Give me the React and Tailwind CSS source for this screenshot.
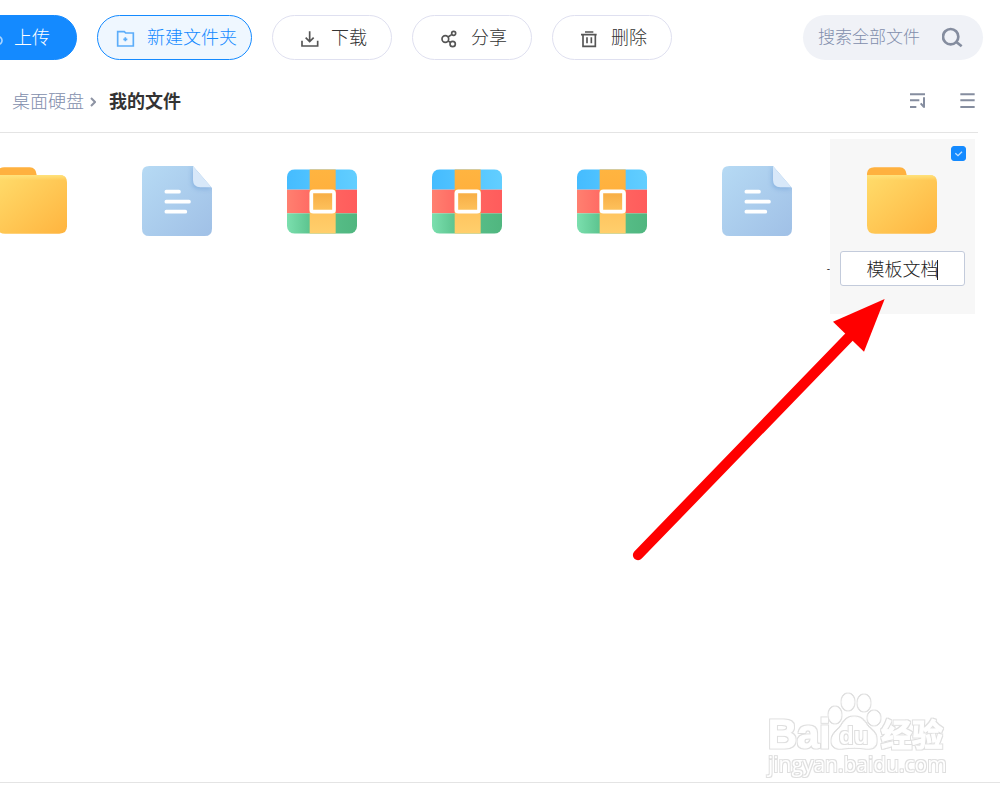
import { useState } from "react";

const initialFiles = [
  { id: 1, type: "folder" },
  { id: 2, type: "doc" },
  { id: 3, type: "archive" },
  { id: 4, type: "archive" },
  { id: 5, type: "archive" },
  { id: 6, type: "doc", label: "-" },
  { id: 7, type: "folder", editing: true },
];

function ToolIcon({ children, className = "" }) {
  return (
    <svg
      viewBox="0 0 63 63"
      className={`h-[21px] w-[21px] shrink-0 ${className}`}
      fill="none"
      stroke="currentColor"
      strokeWidth="5"
      aria-hidden="true"
    >
      {children}
    </svg>
  );
}

function ToolButton({ icon, label, className }) {
  return (
    <button
      type="button"
      className={`flex h-[45px] shrink-0 items-center gap-[11px] rounded-full border text-lg whitespace-nowrap ${className}`}
    >
      {icon}
      <span>{label}</span>
    </button>
  );
}

function FolderIcon() {
  return (
    <svg viewBox="0 0 210 210" className="block h-[70px] w-[70px]" aria-hidden="true">
      <defs>
        <linearGradient id="folderBody" x1="0" y1="0" x2="1" y2="1">
          <stop offset="0" stopColor="#ffdc6b" />
          <stop offset="1" stopColor="#ffb43f" />
        </linearGradient>
        <linearGradient id="folderEdge" x1="0" y1="0" x2="0" y2="1">
          <stop offset="0" stopColor="#ffe27c" />
          <stop offset="1" stopColor="#ffe27c" stopOpacity="0" />
        </linearGradient>
      </defs>
      <path d="M0 34V22Q2 4 22 4H98Q117 5 119 26V34Z" fill="#ffb13f" />
      <path d="M0 27H187Q210 27 210 49V181Q210 203 187 203H24Q0 203 0 179Z" fill="url(#folderBody)" />
      <path d="M0 27H187Q206 27 209 43H0Z" fill="url(#folderEdge)" />
    </svg>
  );
}

function DocIcon() {
  return (
    <svg viewBox="0 0 210 210" className="block h-[70px] w-[70px]" aria-hidden="true">
      <defs>
        <linearGradient id="docBody" x1="0" y1="0" x2="1" y2="1">
          <stop offset="0" stopColor="#b6daf4" />
          <stop offset="1" stopColor="#a0c0e6" />
        </linearGradient>
        <filter id="docBlur" x="-30%" y="-30%" width="160%" height="160%">
          <feGaussianBlur stdDeviation="7" />
        </filter>
        <clipPath id="docClip">
          <path d="M22 0H153L210 66V188Q210 210 188 210H22Q0 210 0 188V22Q0 0 22 0Z" />
        </clipPath>
      </defs>
      <g clipPath="url(#docClip)">
        <rect width="210" height="210" fill="url(#docBody)" />
        <path d="M150 0V48Q150 70 173 70H210Z" fill="#7ba9dc" opacity="0.7" filter="url(#docBlur)" />
        <path d="M153 0V42Q153 64 175 64H210Z" fill="#d8e8f9" />
      </g>
      <g stroke="#fff" strokeWidth="11" strokeLinecap="round">
        <path d="M73 77H111M73 107H141M73 137H130" />
      </g>
    </svg>
  );
}

function ArchiveIcon() {
  return (
    <svg viewBox="0 0 210 210" className="block h-[70px] w-[70px]" aria-hidden="true">
      <defs>
        <linearGradient id="arBlue" x1="0" y1="0" x2="1" y2="0">
          <stop offset="0" stopColor="#45bcff" />
          <stop offset="1" stopColor="#62ceff" />
        </linearGradient>
        <linearGradient id="arRed" x1="0" y1="0" x2="1" y2="0">
          <stop offset="0" stopColor="#ff8070" />
          <stop offset="0.35" stopColor="#ff6a63" />
          <stop offset="1" stopColor="#ff5c5c" />
        </linearGradient>
        <linearGradient id="arGreen" x1="0" y1="0" x2="1" y2="0">
          <stop offset="0" stopColor="#7bdfae" />
          <stop offset="0.33" stopColor="#5cc48f" />
          <stop offset="1" stopColor="#50b67f" />
        </linearGradient>
        <linearGradient id="arYellow" x1="0" y1="0" x2="0" y2="1">
          <stop offset="0" stopColor="#ffb440" />
          <stop offset="0.3" stopColor="#ffb13e" />
          <stop offset="0.4" stopColor="#f8b048" />
          <stop offset="0.7" stopColor="#ffc661" />
          <stop offset="1" stopColor="#ffcf6c" />
        </linearGradient>
        <clipPath id="arClip">
          <rect y="10" width="210" height="193" rx="23" />
        </clipPath>
      </defs>
      <g clipPath="url(#arClip)">
        <rect y="10" width="210" height="61" fill="url(#arBlue)" />
        <rect y="71" width="210" height="71" fill="url(#arRed)" />
        <rect y="142" width="210" height="61" fill="url(#arGreen)" />
        <rect x="68" y="10" width="78" height="193" fill="url(#arYellow)" />
      </g>
      <rect x="73" y="76" width="68" height="61" rx="6" fill="none" stroke="#fff" strokeWidth="11" />
    </svg>
  );
}

const icons = { folder: FolderIcon, doc: DocIcon, archive: ArchiveIcon };

function FileTile({ file }) {
  const [name, setName] = useState("模板文档");
  const [checked, setChecked] = useState(true);
  const Icon = icons[file.type];

  return (
    <li className={`relative h-[175px] w-[145px] shrink-0 pt-[27px] ${file.editing ? "bg-[#f7f7f7]" : ""}`}>
      <div className="px-[37px]">
        <Icon />
      </div>

      {file.label && (
        <p className="mt-[27px] text-right text-[10px] leading-3 text-[#333]">{file.label}</p>
      )}

      {file.editing && (
        <>
          <label className="absolute top-[7px] right-[9px] block h-[15px] w-[15px]">
            <input
              type="checkbox"
              checked={checked}
              onChange={(e) => setChecked(e.target.checked)}
              aria-label="选择"
              className="block h-[15px] w-[15px] appearance-none rounded-[3px] border border-[#148aff] bg-white checked:bg-[#148aff]"
            />
            <svg viewBox="0 0 45 45" className="pointer-events-none absolute inset-0" fill="none" aria-hidden="true">
              <path d="M13 22L21 29L33 17" stroke="#c4e2ff" strokeWidth="4" />
            </svg>
          </label>
          <div className="relative mx-[10px] mt-[15px]">
            <input
              type="text"
              value={name}
              onChange={(e) => setName(e.target.value)}
              aria-label="文件名"
              className="block h-[35px] w-full rounded-[3px] border border-[#c3cbdb] bg-white pb-px text-center text-lg font-light text-[#222] outline-none"
            />
            <span className="absolute top-[9px] right-[27px] h-5 w-px bg-[#222]" />
          </div>
        </>
      )}
    </li>
  );
}

function Watermark() {
  return (
    <svg
      viewBox="0 0 220 110"
      className="pointer-events-none absolute right-[30px] bottom-[-8px] h-[110px] w-[220px]"
      fill="#fff"
      aria-hidden="true"
    >
      <defs>
        {/* white shapes with a soft grey rim */}
        <filter id="rim" x="-5%" y="-5%" width="110%" height="110%">
          <feMorphology in="SourceAlpha" operator="dilate" radius="1" result="grown" />
          <feGaussianBlur in="grown" stdDeviation="0.5" result="soft" />
          <feFlood floodColor="#dfdfdf" />
          <feComposite in2="soft" operator="in" result="edge" />
          <feMerge>
            <feMergeNode in="edge" />
            <feMergeNode in="SourceGraphic" />
          </feMerge>
        </filter>
      </defs>
      <g filter="url(#rim)" stroke="#fff" strokeWidth="1">
        <text x="18" y="68" fontSize="40" fontWeight="bold" fontFamily="Liberation Sans, sans-serif">Bai</text>
        <ellipse cx="85" cy="35" rx="6" ry="8" />
        <ellipse cx="98" cy="22" rx="6" ry="8" />
        <ellipse cx="114" cy="23" rx="6" ry="8" />
        <ellipse cx="124" cy="38" rx="6" ry="7" />
        <path d="M104 37C97 37 94 42 91 47C87 51 82 55 82 61C82 67 87 69 93 68C100 67 109 67 115 68C122 69 127 67 126 59C126 53 121 50 117 46C114 41 111 37 104 37Z" />
        <text x="131" y="66" fontSize="31" fontWeight="bold" fontFamily="Noto Sans CJK SC, sans-serif">经验</text>
      </g>
      <g filter="url(#rim)">
        <text x="89" y="64" fontSize="24" fontWeight="bold" fontFamily="Liberation Sans, sans-serif">du</text>
        <text x="18" y="92" fontSize="21" fontFamily="Open Sans, sans-serif">jingyan.baidu.com</text>
      </g>
    </svg>
  );
}

export default function App() {
  const [query, setQuery] = useState("");

  return (
    <div className="relative flex min-h-screen flex-col overflow-hidden bg-white font-['Liberation_Sans','Noto_Sans_CJK_SC',sans-serif] text-[#333]">
      <header className="flex items-center gap-5 pt-[15px] pr-[17px] font-light">
        <ToolButton
          label="上传"
          className="-ml-[43px] w-[120px] border-[#148aff] bg-[#148aff] pl-6 text-white"
          icon={
            <ToolIcon className="text-[#a9d4ff]">
              <path d="M18 52H14A12 12 0 0 1 12 29A19 19 0 0 1 48 29A11 11 0 0 1 49 52H45M32 56V32M23 40L32 31L41 40" />
            </ToolIcon>
          }
        />
        <ToolButton
          label="新建文件夹"
          className="w-[155px] border-[#148aff] bg-[#eff7ff] pl-[17px] text-[#148aff]"
          icon={
            <ToolIcon className="text-[#5cadfa]">
              <path d="M8 14H28L32 18H55V57H8Z" />
              <path d="M31 31V43M25 37H37" strokeWidth="5" />
            </ToolIcon>
          }
        />
        <ToolButton
          label="下载"
          className="w-[120px] border-[#dfe0f0] bg-white pl-[26px]"
          icon={
            <ToolIcon className="text-[#555]">
              <path d="M9 41V57H56V41M32 13V44M20 32L32 44L44 32" />
            </ToolIcon>
          }
        />
        <ToolButton
          label="分享"
          className="w-[120px] border-[#dfe0f0] bg-white pl-[26px]"
          icon={
            <ToolIcon className="text-[#555]">
              <circle cx="19" cy="36" r="10" />
              <circle cx="44" cy="19" r="6" />
              <circle cx="41" cy="51" r="8" />
              <path d="M27 30L39 22M27 42L34 46" />
            </ToolIcon>
          }
        />
        <ToolButton
          label="删除"
          className="w-[120px] border-[#dfe0f0] bg-white pl-[26px]"
          icon={
            <ToolIcon className="text-[#555]">
              <path d="M6 23H53M18 15H43M12 23V58H49V23M24 31V49M37 31V49" />
            </ToolIcon>
          }
        />

        <form
          onSubmit={(e) => e.preventDefault()}
          className="ml-auto flex h-[45px] w-[180px] items-center rounded-full bg-[#f0f2f7] pr-5 pl-[15px]"
        >
          <input
            type="text"
            value={query}
            onChange={(e) => setQuery(e.target.value)}
            placeholder="搜索全部文件"
            aria-label="搜索全部文件"
            className="min-w-0 flex-1 bg-transparent text-[17px] outline-none placeholder:text-[#828eac]"
          />
          <button type="submit" aria-label="搜索" className="text-[#858d9f]">
            <ToolIcon>
              <circle cx="26" cy="29" r="23" strokeWidth="8" />
              <path d="M43 45L59 58" strokeWidth="8" />
            </ToolIcon>
          </button>
        </form>
      </header>

      <div className="mr-[22px] flex h-[73px] items-center justify-between border-b border-[#e4e4e4] pt-[10px] pl-3 text-lg">
        <nav className="flex items-center pt-[2px]">
          <a href="#" className="font-light text-[#828eac]">桌面硬盘</a>
          <svg viewBox="0 0 18 30" className="mr-[13px] ml-[6px] h-[10px] w-[6px]" fill="none" aria-hidden="true">
            <path d="M3 3L15 15L3 27" stroke="#8d93a3" strokeWidth="6" />
          </svg>
          <span className="font-bold">我的文件</span>
        </nav>
        <div className="flex gap-[30px] text-[#858d9f]">
          <button type="button" aria-label="排序">
            <svg viewBox="0 0 60 60" className="block h-5 w-5" fill="none" stroke="currentColor" strokeWidth="6">
              <path d="M6 10H51M6 28H34M6 48H25M48 19V50M38 37L48 48" />
            </svg>
          </button>
          <button type="button" aria-label="列表">
            <svg viewBox="0 0 60 60" className="block h-5 w-5" fill="none" stroke="currentColor" strokeWidth="6">
              <path d="M7 10H50M7 28H50M7 48H50" />
            </svg>
          </button>
        </div>
      </div>

      <main className="relative mb-[17px] flex-1 border-b border-[#e4e4e4] pt-[6px]">
        <ul className="flex justify-end pr-[25px]">
          {initialFiles.map((file) => (
            <FileTile key={file.id} file={file} />
          ))}
        </ul>
        <Watermark />
      </main>

      {/* pointer to the name field */}
      <svg
        viewBox="0 0 840 840"
        className="pointer-events-none absolute top-[290px] right-[100px] h-[280px] w-[280px]"
        aria-hidden="true"
      >
        <path d="M54 795L700 128" stroke="#f00" strokeWidth="31" strokeLinecap="round" />
        <path d="M794 27L639 95L732 185Z" fill="#f00" />
      </svg>
    </div>
  );
}
